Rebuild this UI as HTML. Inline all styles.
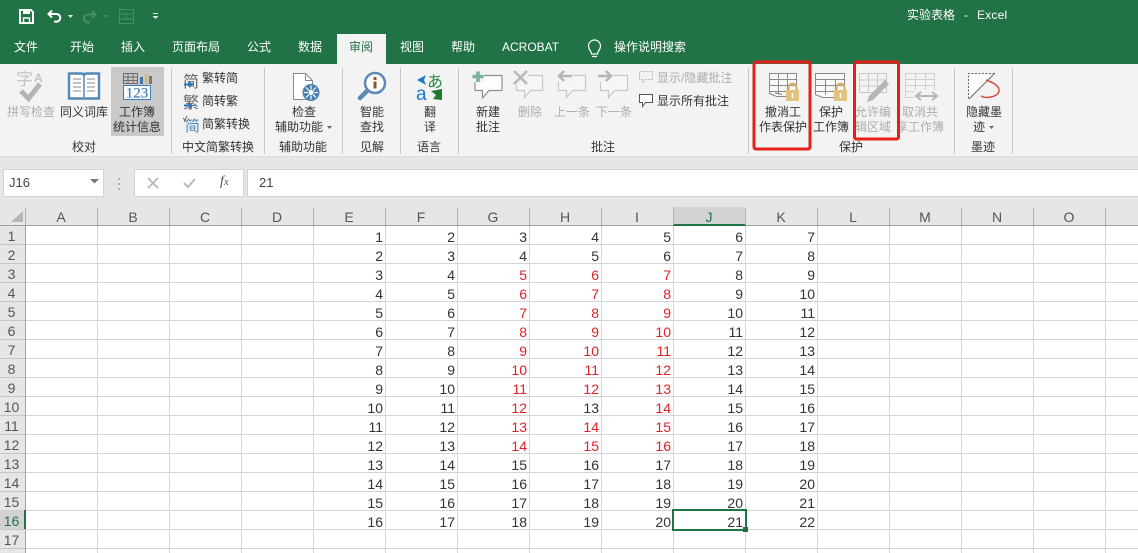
<!DOCTYPE html>
<html lang="zh"><head><meta charset="utf-8"><title>实验表格 - Excel</title>
<style>
*{box-sizing:border-box}
html,body{margin:0;padding:0;width:1138px;height:553px;overflow:hidden;background:#e6e6e6}
body{position:relative;font-family:"Liberation Sans","Noto Sans CJK SC",sans-serif;font-size:12px;color:#333}
.a{position:absolute;white-space:nowrap}
.top{left:0;top:0;width:1138px;height:64px;background:#217346}
.tab{top:39px;color:#fff;line-height:17px;font-size:12px}
.act{left:337px;top:34px;width:49px;height:31px;background:#f3f3f3}
.rib{left:0;top:64px;width:1138px;height:93px;background:#f3f3f3;border-bottom:1px solid #dcdcdc}
.c{position:absolute;white-space:nowrap;text-align:center;width:100px;line-height:15px;color:#333;font-size:12px}
.w{margin-top:1px}
.l{position:absolute;white-space:nowrap;line-height:15px;color:#333;font-size:12px}
.g{color:#adadad}
.sep{position:absolute;top:68px;width:1px;height:86px;background:#c8c8c8}
.box{position:absolute;background:#fff;border:1px solid #d4d4d4}
.hdr{left:0;top:207px;width:1138px;height:19px;background:#e6e6e6;border-bottom:1px solid #9f9f9f}
.ch{position:absolute;top:208px;width:72px;height:18px;margin-left:-1px;text-align:center;font-size:14px;line-height:19px;color:#555}
.chl{position:absolute;top:208px;width:1px;height:17px;background:#b4b4b4}
.rh{left:0;top:226px;width:26px;height:327px;background-color:#e6e6e6;border-right:1px solid #9f9f9f;
background-image:linear-gradient(to bottom,#c6c6c6 1px,transparent 1px);background-size:100% 19px;background-position:0 18px}
.grid{left:25px;top:226px;width:1113px;height:327px;background-color:#fff;
background-image:linear-gradient(to right,#d4d4d4 1px,transparent 1px),linear-gradient(to bottom,#d4d4d4 1px,transparent 1px);
background-size:72px 19px,72px 19px;background-position:0 0,0 18px}
.rn{left:0;top:227px;width:23px;text-align:center;font-size:14px;line-height:19px;color:#555;white-space:normal}
.col{position:absolute;top:228px;width:68px;text-align:right;font-size:14px;line-height:19px;color:#333;white-space:nowrap}
.col i{font-style:normal;color:#e0212a}
</style></head><body>
<div class="a top"></div>
<div class="a act"></div>
<div class="a rib"></div>

<div class="a" style="left:907px;top:7px;color:#fff;line-height:16px;font-size:12px">实验表格</div>
<div class="a" style="left:964px;top:7px;color:#fff;line-height:16px;font-size:12px">-</div>
<div class="a" style="left:977px;top:7px;color:#fff;line-height:16px;font-size:12px;letter-spacing:.2px">Excel</div>

<div class="a tab" style="left:14px">文件</div>
<div class="a tab" style="left:70px">开始</div>
<div class="a tab" style="left:121px">插入</div>
<div class="a tab" style="left:172px">页面布局</div>
<div class="a tab" style="left:247px">公式</div>
<div class="a tab" style="left:298px">数据</div>
<div class="a tab" style="left:349px;color:#217346">审阅</div>
<div class="a tab" style="left:400px">视图</div>
<div class="a tab" style="left:451px">帮助</div>
<div class="a tab" style="left:502px">ACROBAT</div>
<div class="a tab" style="left:614px">操作说明搜索</div>

<div class="c w" style="left:-19px;top:104px;color:#adadad">拼写检查</div>
<div class="c w" style="left:34px;top:104px">同义词库</div>
<div class="a" style="left:111px;top:67px;width:53px;height:69px;background:#c9c9c9"></div>
<div class="c w" style="left:87px;top:104px">工作簿<br>统计信息</div>
<div class="c" style="left:34px;top:140px">校对</div>

<div class="l" style="left:202px;top:71px">繁转简</div>
<div class="l" style="left:202px;top:94px">简转繁</div>
<div class="l" style="left:202px;top:117px">简繁转换</div>
<div class="c" style="left:168px;top:140px">中文简繁转换</div>

<div class="c w" style="left:254px;top:104px">检查</div>
<div class="l" style="left:275px;top:120px">辅助功能</div>
<div class="c" style="left:253px;top:140px">辅助功能</div>

<div class="c w" style="left:322px;top:104px">智能<br>查找</div>
<div class="c" style="left:322px;top:140px">见解</div>

<div class="c w" style="left:380px;top:104px">翻<br>译</div>
<div class="c" style="left:379px;top:140px">语言</div>

<div class="c w" style="left:438px;top:104px">新建<br>批注</div>
<div class="c w g" style="left:480px;top:104px">删除</div>
<div class="c w g" style="left:522px;top:104px">上一条</div>
<div class="c w g" style="left:564px;top:104px">下一条</div>
<div class="l g" style="left:657px;top:71px">显示/隐藏批注</div>
<div class="l" style="left:657px;top:94px">显示所有批注</div>
<div class="c" style="left:553px;top:140px">批注</div>

<div class="c w" style="left:733px;top:104px">撤消工<br>作表保护</div>
<div class="c w" style="left:781px;top:104px">保护<br>工作簿</div>
<div class="c w g" style="left:823px;top:104px">允许编<br>辑区域</div>
<div class="c w g" style="left:870px;top:104px">取消共<br>享工作簿</div>
<div class="c" style="left:801px;top:140px">保护</div>
<div class="c w" style="left:934px;top:104px">隐藏墨</div>
<div class="l" style="left:973px;top:120px">迹</div>
<div class="c" style="left:933px;top:140px">墨迹</div>

<div class="sep" style="left:171px"></div>
<div class="sep" style="left:264px"></div>
<div class="sep" style="left:342px"></div>
<div class="sep" style="left:400px"></div>
<div class="sep" style="left:458px"></div>
<div class="sep" style="left:748px"></div>
<div class="sep" style="left:954px"></div>
<div class="sep" style="left:1012px"></div>

<div class="box" style="left:3px;top:169px;width:101px;height:28px"></div>
<div class="a" style="left:9px;top:175px;font-size:13px;line-height:16px;color:#444">J16</div>
<div class="box" style="left:134px;top:169px;width:110px;height:28px"></div>
<div class="box" style="left:247px;top:169px;width:900px;height:28px"></div>
<div class="a" style="left:259px;top:175px;font-size:13px;line-height:16px;color:#444">21</div>
<div class="a" style="left:220px;top:174px;font-family:'Liberation Serif',serif;font-style:italic;font-size:14px;line-height:16px;color:#555">f<span style="font-size:11px">x</span></div>

<div class="a grid"></div>
<div class="a hdr"></div>
<div class="a rh"></div>
<div class="a" style="left:673px;top:207px;width:73px;height:19px;background:#d2d2d2;border-bottom:2px solid #217346"></div>
<div class="a" style="left:0;top:510px;width:26px;height:19px;background:#d2d2d2;border-right:2px solid #217346"></div>

<div class="chl" style="left:25px"></div><div class="chl" style="left:97px"></div><div class="chl" style="left:169px"></div><div class="chl" style="left:241px"></div><div class="chl" style="left:313px"></div><div class="chl" style="left:385px"></div><div class="chl" style="left:457px"></div><div class="chl" style="left:529px"></div><div class="chl" style="left:601px"></div><div class="chl" style="left:673px"></div><div class="chl" style="left:745px"></div><div class="chl" style="left:817px"></div><div class="chl" style="left:889px"></div><div class="chl" style="left:961px"></div><div class="chl" style="left:1033px"></div><div class="chl" style="left:1105px"></div>
<div class="ch" style="left:26px">A</div><div class="ch" style="left:98px">B</div><div class="ch" style="left:170px">C</div><div class="ch" style="left:242px">D</div><div class="ch" style="left:314px">E</div><div class="ch" style="left:386px">F</div><div class="ch" style="left:458px">G</div><div class="ch" style="left:530px">H</div><div class="ch" style="left:602px">I</div><div class="ch" style="left:674px;color:#217346">J</div><div class="ch" style="left:746px">K</div><div class="ch" style="left:818px">L</div><div class="ch" style="left:890px">M</div><div class="ch" style="left:962px">N</div><div class="ch" style="left:1034px">O</div>

<div class="a rn">1<br>2<br>3<br>4<br>5<br>6<br>7<br>8<br>9<br>10<br>11<br>12<br>13<br>14<br>15<br><span style="color:#217346">16</span><br>17</div>

<div class="col" style="left:315px">1<br>2<br>3<br>4<br>5<br>6<br>7<br>8<br>9<br>10<br>11<br>12<br>13<br>14<br>15<br>16</div>
<div class="col" style="left:387px">2<br>3<br>4<br>5<br>6<br>7<br>8<br>9<br>10<br>11<br>12<br>13<br>14<br>15<br>16<br>17</div>
<div class="col" style="left:459px">3<br>4<br><i>5</i><br><i>6</i><br><i>7</i><br><i>8</i><br><i>9</i><br><i>10</i><br><i>11</i><br><i>12</i><br><i>13</i><br><i>14</i><br>15<br>16<br>17<br>18</div>
<div class="col" style="left:531px">4<br>5<br><i>6</i><br><i>7</i><br><i>8</i><br><i>9</i><br><i>10</i><br><i>11</i><br><i>12</i><br>13<br><i>14</i><br><i>15</i><br>16<br>17<br>18<br>19</div>
<div class="col" style="left:603px">5<br>6<br><i>7</i><br><i>8</i><br><i>9</i><br><i>10</i><br><i>11</i><br><i>12</i><br><i>13</i><br><i>14</i><br><i>15</i><br><i>16</i><br>17<br>18<br>19<br>20</div>
<div class="col" style="left:675px">6<br>7<br>8<br>9<br>10<br>11<br>12<br>13<br>14<br>15<br>16<br>17<br>18<br>19<br>20<br>21</div>
<div class="col" style="left:747px">7<br>8<br>9<br>10<br>11<br>12<br>13<br>14<br>15<br>16<br>17<br>18<br>19<br>20<br>21<br>22</div>

<div class="a" style="left:672px;top:509px;width:75px;height:22px;border:2px solid #217346"></div>
<div class="a" style="left:743px;top:527px;width:5px;height:5px;background:#217346"></div>

<svg class="a" style="left:0;top:0" width="1138" height="553" viewBox="0 0 1138 553" fill="none">
<!-- QAT -->
<path d="M20 10h11l2 2v11H20z" stroke="#fff" stroke-width="2"/><rect x="23" y="10" width="7" height="4" fill="#fff"/><path d="M23.500 23v-5h6v5" stroke="#fff" stroke-width="1.500"/>
<path d="M52 10.500l-3.500 3.500 3.500 3.500M49 14h7.500a3.800 3.800 0 0 1 0 7.600H54" stroke="#fff" stroke-width="2"/>
<path d="M68 15h5l-2.500 3z" fill="#e6efe9"/>
<path d="M92 11l3.500 3.500-3.500 3.500M95 14.500h-7a4 4 0 0 0 0 8h2" stroke="#458f68" stroke-width="2"/>
<path d="M103 15h5l-2.500 3z" fill="#458f68"/>
<path d="M119.500 9.500h14v14h-14zM119.500 14h14M119.500 19h14M126.500 14v5" stroke="#458f68"/>
<path d="M153 13.500h5" stroke="#e6efe9"/><path d="M152.500 16h6l-3 3z" fill="#e6efe9"/>
<!-- bulb -->
<path d="M591.500 54c0-3-3-4-3-8a6 6 0 0 1 12 0c0 4-3 5-3 8zM592 56.500h5" stroke="#fff" stroke-width="1.200"/>
<!-- spell -->
<text x="16" y="85" font-size="17" fill="#c4c4c4" font-family="Noto Sans CJK SC">字</text><text x="34" y="82" font-size="12" fill="#c4c4c4" font-family="Liberation Sans" font-weight="bold">A</text>
<path d="M21 91l7.500 7.500L40 84" stroke="#b5b5b5" stroke-width="5"/>
<!-- book -->
<path d="M69 73.500h12.500c1 0 2 .5 2.500 1.500.5-1 1.500-1.500 2.500-1.500H99v25H69z" fill="#fdfdfd" stroke="#5588b5" stroke-width="2.400"/>
<path d="M84 75v22" stroke="#5588b5" stroke-width="1.500"/>
<path d="M73 79h8M73 83h8M73 87h8M73 91h8M87 79h8M87 83h8M87 87h8M87 91h8" stroke="#8a8a8a"/>
<!-- workbook stats -->
<path d="M123.500 73.500h14v10h-14zM123.500 77h14M123.500 80.500h14M128 73.500v10M133 73.500v10" stroke="#6b6b6b"/>
<rect x="140" y="77" width="3" height="7" fill="#3f75a8"/><rect x="145" y="74" width="3" height="10" fill="#e0b860"/><rect x="149" y="76" width="3" height="8" fill="#777"/>
<rect x="123.500" y="85.500" width="27" height="14" fill="#f6fafd" stroke="#3f7fb5"/>
<text x="137" y="97.500" font-size="15" text-anchor="middle" fill="#2f6ea6" font-family="Liberation Serif">123</text>
<!-- chinese conv -->
<text x="183" y="87" font-size="16" fill="#666" font-family="Noto Sans CJK SC">简</text>
<path d="M184 84.500h7" stroke="#2f78b8" stroke-width="2"/><path d="M189 81l4 3.500-4 3.500z" fill="#2f78b8"/>
<text x="183" y="108" font-size="16" fill="#666" font-family="Noto Sans CJK SC">繁</text>
<path d="M184 105.500h7" stroke="#2f78b8" stroke-width="2"/><path d="M189 102l4 3.500-4 3.500z" fill="#2f78b8"/>
<text x="185" y="131" font-size="15" fill="#4a86b5" font-family="Noto Sans CJK SC">简</text>
<path d="M183 118l3 3M187 116l-3 6" stroke="#666"/>
<!-- accessibility -->
<path d="M293.500 73.500h12l7 7v19h-19z" fill="#fff" stroke="#8a8a8a"/><path d="M305.500 73.500v7h7" stroke="#8a8a8a"/>
<circle cx="311" cy="92.500" r="8.500" fill="#4a7fb0"/><circle cx="311" cy="92.500" r="2.500" fill="#fff"/>
<path d="M311 85.500v4M311 95.500v4M304 92.500h4M314 92.500h4M306 87.500l3 3M316 87.500l-3 3M306 97.500l3-3M316 97.500l-3-3" stroke="#fff" stroke-width="1.200"/>
<path d="M327 126h5l-2.500 3z" fill="#666"/>
<!-- smart lookup -->
<circle cx="375" cy="83" r="10" fill="#fff" stroke="#5f89b5" stroke-width="2.500"/>
<path d="M367 91l-7 7" stroke="#5f89b5" stroke-width="4.500" stroke-linecap="round"/>
<rect x="373.500" y="81.500" width="3" height="7" fill="#8a5a30"/><rect x="373.500" y="77" width="3" height="3" fill="#8a5a30"/>
<!-- translate -->
<polygon points="417,80 426,75 424,80 426,85" fill="#1e78c8"/>
<text x="427" y="87" font-size="16" fill="#2a8a3c" font-family="Noto Sans CJK JP">あ</text>
<text x="416" y="100" font-size="19" fill="#1e78c8" font-family="Liberation Sans">a</text>
<polygon points="431,91 442,89 442,100 433,99 436,95" fill="#1f7a30"/>
<!-- comments -->
<path d="M475.500 75.500h26a.5.500 0 0 1 .5.500v14a.5.500 0 0 1-.5.500H489l-6.500 7.500v-7.500h-7a.5.500 0 0 1-.5-.5V76a.5.500 0 0 1 .5-.5z" fill="#fdfdfd" stroke="#8f8f8f" stroke-width="1.200"/>
<rect x="472" y="71" width="12" height="11" fill="#f3f3f3"/>
<path d="M478 71.500v10.500M472.500 76.500h11" stroke="#7aaea2" stroke-width="3.600"/>
<path d="M516.500 75.500h26v15h-12l-6 7v-7h-8z" fill="#f6f6f6" stroke="#c8c8c8" stroke-width="1.200"/>
<rect x="513" y="71" width="15" height="14" fill="#f3f3f3"/>
<path d="M514 71l13 13M527 71l-13 13" stroke="#b8b8b8" stroke-width="2.500"/>
<path d="M558.500 75.500h27v15h-13l-6 7v-7h-8z" fill="#f6f6f6" stroke="#c8c8c8" stroke-width="1.200"/>
<rect x="556" y="70" width="17" height="12" fill="#f3f3f3"/>
<path d="M572 76h-13M564 71l-5 5 5 5" stroke="#b5b5b5" stroke-width="2.500"/>
<path d="M600.500 75.500h27v15h-13l-6 7v-7h-8z" fill="#f6f6f6" stroke="#c8c8c8" stroke-width="1.200"/>
<rect x="597" y="70" width="16" height="12" fill="#f3f3f3"/>
<path d="M598 76h13M606 71l5 5-5 5" stroke="#b5b5b5" stroke-width="2.500"/>
<path d="M639.500 71.500h13v8h-7l-3 3.500v-3.500h-3z" stroke="#bdbdbd" stroke-dasharray="2 1"/>
<path d="M639.500 94.500h13v8h-7l-3 4v-4h-3z" fill="#fff" stroke="#555"/>
<!-- protect 1 -->
<path d="M769.500 73.500h27v23h-20l-7-3zM769.500 79.500h27M769.500 85.500h27M769.500 91.500h27M778.500 73.500v20M787.500 73.500v20" stroke="#8a8a8a" fill="#f8f8f8"/>
<path d="M775 93l7 1.500" stroke="#777"/>
<rect x="786" y="90" width="13" height="11" fill="#e3c27f"/><path d="M788.500 90v-2.500a4 4 0 0 1 8 0v2.500" stroke="#d8ad5e" stroke-width="2"/><path d="M792.500 93v5" stroke="#fff" stroke-width="1.500"/>
<!-- protect 2 -->
<path d="M815.500 73.500h29v24h-22l-7-3zM815.500 79.500h29M815.500 85.500h29M815.500 91.500h29M825.500 79.500v15M835.500 79.500v15" stroke="#8a8a8a" fill="#f8f8f8"/>
<rect x="834" y="90" width="13" height="11" fill="#e3c27f"/><path d="M836.500 90v-2.500a4 4 0 0 1 8 0v2.500" stroke="#d8ad5e" stroke-width="2"/><path d="M840.500 93v5" stroke="#fff" stroke-width="1.500"/>
<!-- allow edit -->
<path d="M859.500 73.500h27v19h-27zM859.500 80h27M859.500 86h27M868.500 73.500v19M877.500 73.500v19" stroke="#c8c8c8"/>
<path d="M867 102l2-6 16-16 4 4-16 16z" fill="#b5b5b5"/>
<!-- unshare -->
<path d="M905.500 73.500h29v24h-29zM905.500 79.500h29M905.500 85.500h29M905.500 91.500h29M915.500 73.500v24M925.500 73.500v24" stroke="#cfcfcf"/>
<rect x="914" y="90" width="24" height="11" fill="#f3f3f3"/>
<path d="M917 96h19M921 92l-5 4 5 4M932 92l5 4-5 4" stroke="#b5b5b5" stroke-width="2"/>
<!-- hide ink -->
<path d="M968.500 73.500h26l-26 25z" fill="#fff"/>
<path d="M994.500 73.500h-26v25" stroke="#666" stroke-dasharray="2 1.500"/>
<path d="M995 73l-26 26" stroke="#666"/>
<path d="M986 80c6 2 14 6 13 11-1 6-13 8-18 5" stroke="#cf5040" stroke-width="1.500"/>
<path d="M989 126h5l-2.500 3z" fill="#666"/>
<!-- name box arrows etc -->
<path d="M90 179h9l-4.500 4.500z" fill="#777"/>
<path d="M119 178v2M119 183v2M119 188v2" stroke="#a0a0a0" stroke-width="1.500"/>
<path d="M148 178l10 10M158 178l-10 10" stroke="#b8b8b8" stroke-width="1.800"/>
<path d="M184 183l4 4 7-8" stroke="#b8b8b8" stroke-width="2"/>
<!-- corner -->
<path d="M23 211v11H11z" fill="#b5b5b5"/>
<!-- red frames -->
<rect x="754" y="62" width="56" height="87" rx="2" stroke="#e5201a" stroke-width="3"/>
<rect x="854.500" y="62" width="44" height="77" rx="2" stroke="#e5201a" stroke-width="3"/>
</svg>
</body></html>
